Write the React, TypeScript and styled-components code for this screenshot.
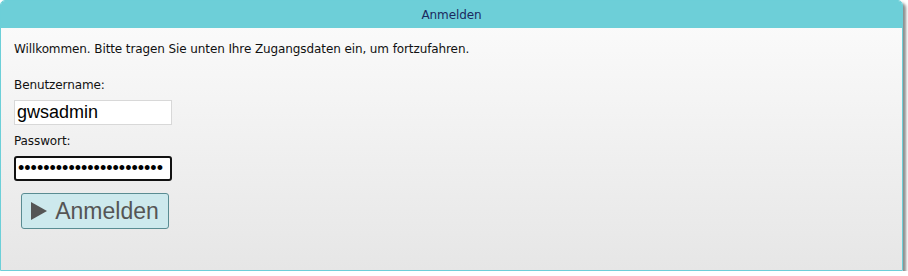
import React from "react";
import styled, { createGlobalStyle } from "styled-components";

const Global = createGlobalStyle`
  html, body { margin: 0; padding: 0; background: #ffffff; }
  body { font-family: "DejaVu Sans", "Liberation Sans", sans-serif; }
`;

const Panel = styled.div`
  width: 901px;
  height: 269px;
  border: 1px solid #6ccfd8;
  border-radius: 5px 5px 0 0;
  box-shadow: 3px 3px 3px rgba(0, 0, 0, 0.45);
  background: linear-gradient(#fcfcfc, #e6e6e6);
  display: flex;
  flex-direction: column;
  overflow: hidden;
`;

const Header = styled.div`
  height: 27px;
  background: #6dcfd8;
  color: #1c2a5e;
  font-size: 12px;
  letter-spacing: -0.1px;
  display: flex;
  align-items: center;
  justify-content: center;
  flex-shrink: 0;
`;

const Body = styled.form`
  padding: 14px 13px 0 13px;
  display: flex;
  flex-direction: column;
  align-items: flex-start;
  font-size: 12px;
  letter-spacing: -0.1px;
  color: #111;
`;

const Intro = styled.div`
  margin-bottom: 22px;
`;

const Label = styled.label`
  display: block;
  margin-bottom: 8px;
`;

const Input = styled.input<{ $focus?: boolean }>`
  box-sizing: border-box;
  width: 158px;
  height: 25px;
  margin-bottom: ${(p) => (p.$focus ? "12px" : "9px")};
  padding: 1px 2px;
  font-family: "Liberation Sans", Arial, sans-serif;
  font-size: 18px;
  letter-spacing: 0;
  color: #000;
  background: #fff;
  border: ${(p) => (p.$focus ? "2px solid #111" : "1px solid #d8d8d8")};
  border-radius: ${(p) => (p.$focus ? "3px" : "0")};
  outline: none;
`;

const Button = styled.button`
  margin-left: 7px;
  box-sizing: border-box;
  width: 148px;
  height: 36px;
  background: #cde9ed;
  border: 1px solid #5a8c92;
  border-radius: 3px;
  color: #555;
  font-family: "Liberation Sans", Arial, sans-serif;
  font-size: 23px;
  letter-spacing: 0;
  display: flex;
  align-items: center;
  justify-content: center;
  gap: 8px;
  padding: 0;
`;

const Tri = styled.span`
  width: 0;
  height: 0;
  border-top: 9px solid transparent;
  border-bottom: 9px solid transparent;
  border-left: 16px solid #555;
`;

export default function App() {
  return (
    <>
      <Global />
      <Panel>
        <Header>Anmelden</Header>
        <Body onSubmit={(e) => e.preventDefault()}>
          <Intro>Willkommen. Bitte tragen Sie unten Ihre Zugangsdaten ein, um fortzufahren.</Intro>
          <Label>Benutzername:</Label>
          <Input defaultValue="gwsadmin" />
          <Label>Passwort:</Label>
          <Input $focus type="password" defaultValue="abcdefghijklmnopqrstuvw" />
          <Button type="submit">
            <Tri />
            Anmelden
          </Button>
        </Body>
      </Panel>
    </>
  );
}
